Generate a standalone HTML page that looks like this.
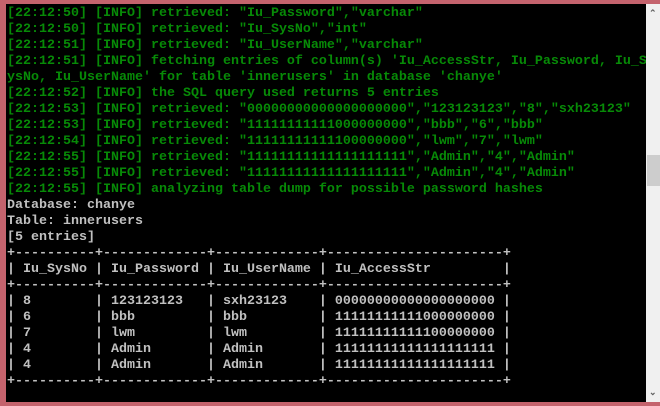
<!DOCTYPE html>
<html><head><meta charset="utf-8"><style>
html,body{margin:0;padding:0;}
body{width:660px;height:406px;background:#c4636d;position:relative;overflow:hidden;}
#con{position:absolute;left:6px;top:4px;width:640px;height:398px;background:#000;overflow:hidden;}
pre{margin:0;position:absolute;left:1px;top:2px;font-family:"Liberation Mono",monospace;font-size:13.33px;line-height:16px;color:#c0c0c0;font-weight:bold;letter-spacing:0;}
.g{color:#078a07;}
#sb{position:absolute;left:646px;top:4px;width:14px;height:398px;background:#f0f0f0;}
#th{position:absolute;left:1px;top:151px;width:13px;height:31px;background:#cdcdcd;}
.ar{position:absolute;left:3px;font:bold 9px "Liberation Sans",sans-serif;color:#606060;}
</style></head><body>
<div id="con"><pre><span class="g">[22:12:50] [INFO] retrieved: "Iu_Password","varchar"
[22:12:50] [INFO] retrieved: "Iu_SysNo","int"
[22:12:51] [INFO] retrieved: "Iu_UserName","varchar"
[22:12:51] [INFO] fetching entries of column(s) 'Iu_AccessStr, Iu_Password, Iu_S
ysNo, Iu_UserName' for table 'innerusers' in database 'chanye'
[22:12:52] [INFO] the SQL query used returns 5 entries
[22:12:53] [INFO] retrieved: "00000000000000000000","123123123","8","sxh23123"
[22:12:53] [INFO] retrieved: "11111111111000000000","bbb","6","bbb"
[22:12:54] [INFO] retrieved: "11111111111100000000","lwm","7","lwm"
[22:12:55] [INFO] retrieved: "11111111111111111111","Admin","4","Admin"
[22:12:55] [INFO] retrieved: "11111111111111111111","Admin","4","Admin"
[22:12:55] [INFO] analyzing table dump for possible password hashes</span>
Database: chanye
Table: innerusers
[5 entries]
+----------+-------------+-------------+----------------------+
| Iu_SysNo | Iu_Password | Iu_UserName | Iu_AccessStr         |
+----------+-------------+-------------+----------------------+
| 8        | 123123123   | sxh23123    | 00000000000000000000 |
| 6        | bbb         | bbb         | 11111111111000000000 |
| 7        | lwm         | lwm         | 11111111111100000000 |
| 4        | Admin       | Admin       | 11111111111111111111 |
| 4        | Admin       | Admin       | 11111111111111111111 |
+----------+-------------+-------------+----------------------+</pre></div>
<div id="sb"><div class="ar" style="top:4px">&#8963;</div><div id="th"></div><div class="ar" style="top:383px">&#8964;</div></div>
</body></html>
